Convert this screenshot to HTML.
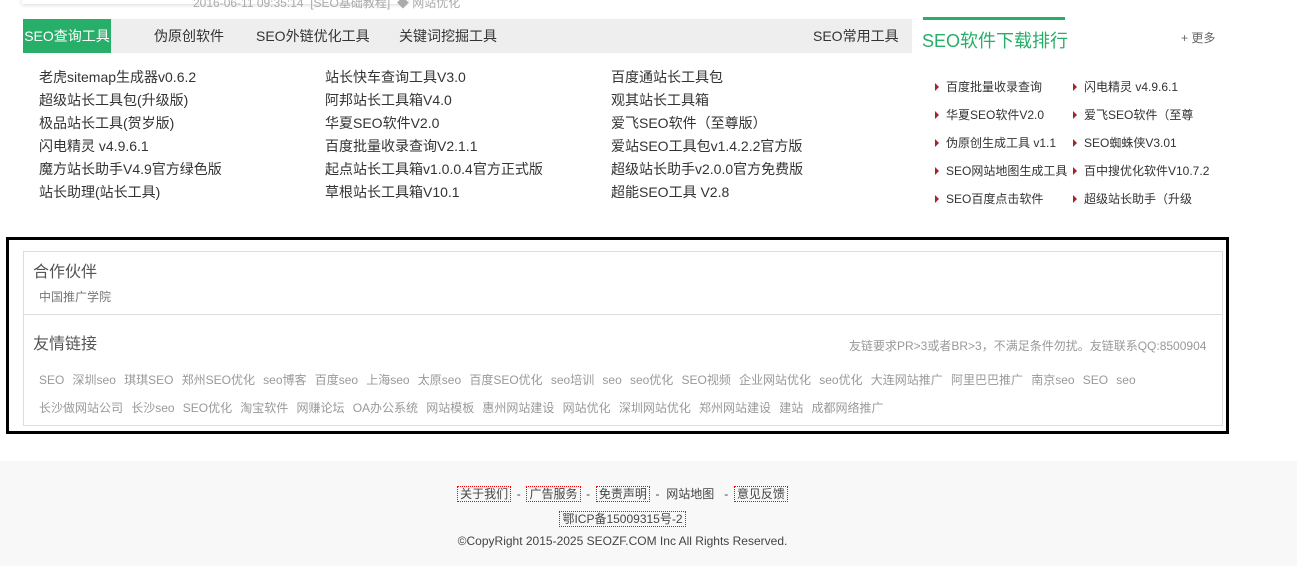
<!DOCTYPE html>
<html><head><meta charset="utf-8"><style>
*{margin:0;padding:0;box-sizing:border-box}
body{width:1297px;height:566px;position:relative;background:#fff;font-family:"Liberation Sans","Noto Sans CJK SC",sans-serif;color:#333;overflow:hidden}
.abs{position:absolute;white-space:nowrap}
.tabs{position:absolute;left:23px;top:19px;width:889px;height:34px;background:#eee}
.tabs span{position:absolute;top:0;line-height:34px;font-size:14px;color:#333}
.tabs .on{background:#27ae68;color:#fff;left:0;width:88px;text-align:center}
.col{position:absolute;top:66px;font-size:14px;line-height:23px;color:#333}
.rl{position:absolute;font-size:12px;color:#333;white-space:nowrap}
.rl i{display:inline-block;width:0;height:0;border-left:4px solid #a8222a;border-top:4px solid transparent;border-bottom:4px solid transparent;margin-right:7px;vertical-align:0}
.fl{position:absolute;font-size:12px;color:#999;white-space:nowrap;word-spacing:0}
.fl span{margin-right:8.2px}
.foot{position:absolute;left:0;top:461px;width:1297px;height:105px;background:#f8f8f8;text-align:center;font-size:12px;color:#444}
.foot div{position:absolute;left:0;width:1245px}
.d{outline:1px dotted red;padding:0 2px}
</style></head><body>
<div class="abs" style="left:22px;top:-10px;width:386px;height:14px;background:#fff;box-shadow:0 1px 4px rgba(0,0,0,.15)"></div>
<div class="abs" style="left:193px;top:-6px;font-size:12px;color:#aaa">2016-06-11 09:35:14 &nbsp;[SEO基础教程] &nbsp;◆ 网站优化</div>
<div class="tabs">
<span class="on">SEO查询工具</span>
<span style="left:131px">伪原创软件</span>
<span style="left:233px">SEO外链优化工具</span>
<span style="left:376px">关键词挖掘工具</span>
<span style="left:790px">SEO常用工具</span>
</div>
<div class="col" style="left:39px">老虎sitemap生成器v0.6.2<br>超级站长工具包(升级版)<br>极品站长工具(贺岁版)<br>闪电精灵 v4.9.6.1<br>魔方站长助手V4.9官方绿色版<br>站长助理(站长工具)</div>
<div class="col" style="left:325px">站长快车查询工具V3.0<br>阿邦站长工具箱V4.0<br>华夏SEO软件V2.0<br>百度批量收录查询V2.1.1<br>起点站长工具箱v1.0.0.4官方正式版<br>草根站长工具箱V10.1</div>
<div class="col" style="left:611px">百度通站长工具包<br>观其站长工具箱<br>爱飞SEO软件（至尊版）<br>爱站SEO工具包v1.4.2.2官方版<br>超级站长助手v2.0.0官方免费版<br>超能SEO工具 V2.8</div>
<div class="abs" style="left:923px;top:17px;width:142px;height:3px;background:#27ae68"></div>
<div class="abs" style="left:922px;top:27px;font-size:18px;color:#27ae68">SEO软件下载排行</div>
<div class="abs" style="left:1181px;top:29px;font-size:12px;color:#666">+ 更多</div>
<div class="rl" style="left:935px;top:78px"><i></i>百度批量收录查询</div>
<div class="rl" style="left:935px;top:106px"><i></i>华夏SEO软件V2.0</div>
<div class="rl" style="left:935px;top:134px"><i></i>伪原创生成工具 v1.1</div>
<div class="rl" style="left:935px;top:162px"><i></i>SEO网站地图生成工具</div>
<div class="rl" style="left:935px;top:190px"><i></i>SEO百度点击软件</div>
<div class="rl" style="left:1073px;top:78px"><i></i>闪电精灵 v4.9.6.1</div>
<div class="rl" style="left:1073px;top:106px"><i></i>爱飞SEO软件（至尊</div>
<div class="rl" style="left:1073px;top:134px"><i></i>SEO蜘蛛侠V3.01</div>
<div class="rl" style="left:1073px;top:162px"><i></i>百中搜优化软件V10.7.2</div>
<div class="rl" style="left:1073px;top:190px"><i></i>超级站长助手（升级</div>
<div class="abs" style="left:6px;top:237px;width:1223px;height:197px;border:3px solid #000"></div>
<div class="abs" style="left:23px;top:251px;width:1200px;height:175px;border:1px solid #ddd"></div>
<div class="abs" style="left:24px;top:314px;width:1198px;height:1px;background:#ddd"></div>
<div class="abs" style="left:33px;top:258px;font-size:16px;color:#555">合作伙伴</div>
<div class="abs" style="left:39px;top:288px;font-size:12px;color:#777">中国推广学院</div>
<div class="abs" style="left:33px;top:330px;font-size:16px;color:#555">友情链接</div>
<div class="abs" style="left:849px;top:337px;font-size:12px;color:#999">友链要求PR&gt;3或者BR&gt;3，不满足条件勿扰。友链联系QQ:8500904</div>
<div class="fl" style="left:39px;top:371px"><span>SEO</span><span>深圳seo</span><span>琪琪SEO</span><span>郑州SEO优化</span><span>seo博客</span><span>百度seo</span><span>上海seo</span><span>太原seo</span><span>百度SEO优化</span><span>seo培训</span><span>seo</span><span>seo优化</span><span>SEO视频</span><span>企业网站优化</span><span>seo优化</span><span>大连网站推广</span><span>阿里巴巴推广</span><span>南京seo</span><span>SEO</span><span>seo</span></div>
<div class="fl" style="left:39px;top:399px"><span>长沙做网站公司</span><span>长沙seo</span><span>SEO优化</span><span>淘宝软件</span><span>网赚论坛</span><span>OA办公系统</span><span>网站模板</span><span>惠州网站建设</span><span>网站优化</span><span>深圳网站优化</span><span>郑州网站建设</span><span>建站</span><span>成都网络推广</span></div>
<div class="foot">
<div style="top:24px">
<span class="d">关于我们</span> &nbsp;-&nbsp; <span class="d">广告服务</span> &nbsp;-&nbsp; <span class="d">免责声明</span> &nbsp;-&nbsp; 网站地图 &nbsp;&nbsp;-&nbsp; <span class="d">意见反馈</span></div>
<div style="top:49px"><span class="d">鄂ICP备15009315号-2</span></div>
<div style="top:73px">©CopyRight 2015-2025 SEOZF.COM Inc All Rights Reserved.</div>
</div>
</body></html>
